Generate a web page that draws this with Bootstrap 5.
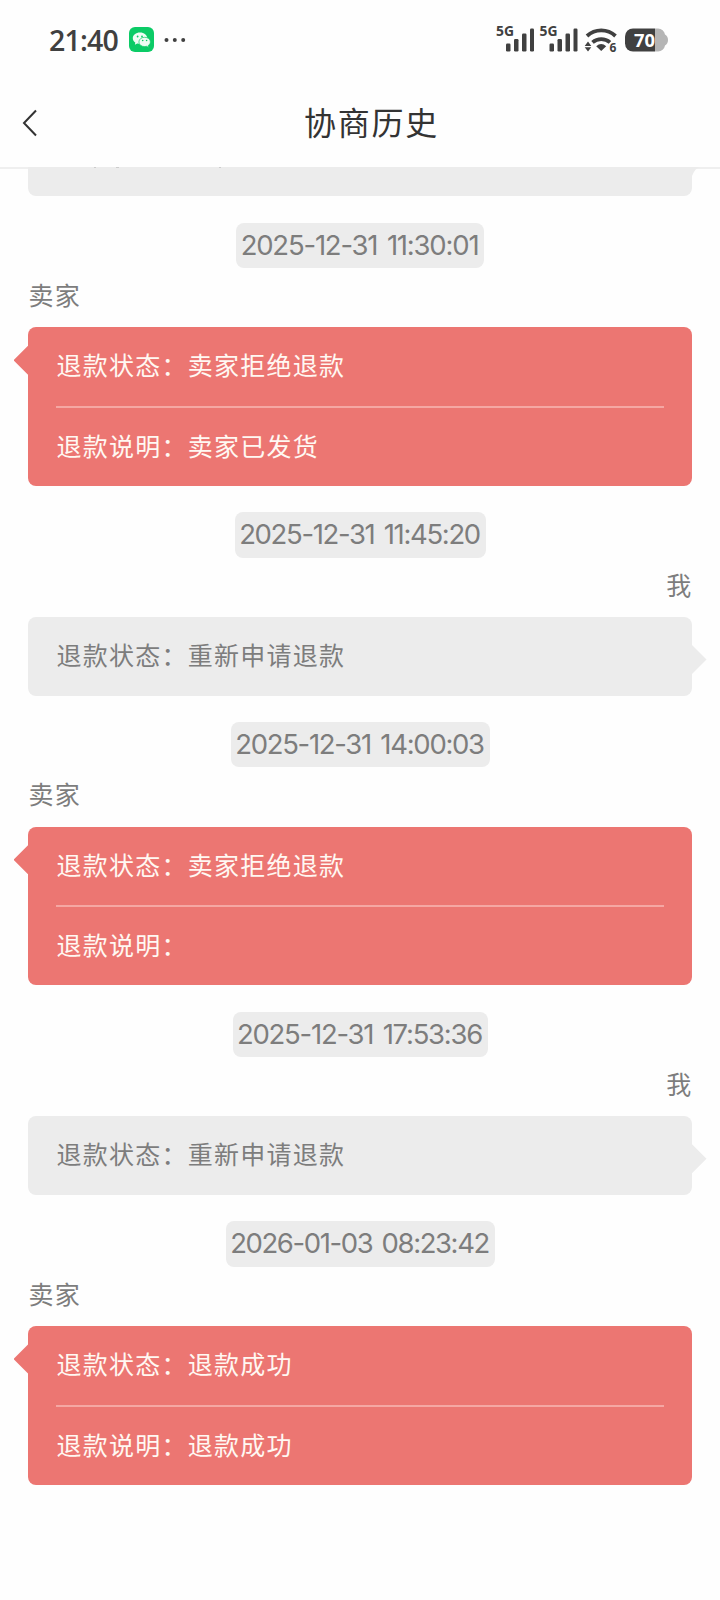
<!DOCTYPE html>
<html lang="zh-CN">
<head>
<meta charset="utf-8">
<meta name="viewport" content="width=device-width, initial-scale=1">
<title>协商历史</title>
<link href="https://cdn.jsdelivr.net/npm/bootstrap@5.3.0/dist/css/bootstrap.min.css" rel="stylesheet">
<style>
body{font-family:"Noto Sans CJK SC",sans-serif;background:#fefefe;color:#7d7d7d;height:1600px;overflow:hidden}
.status-bar{height:80px;padding:0 49px 0 49px;color:#404040}
.clock{font:600 28.5px/40px "Open Sans",sans-serif;letter-spacing:-.8px;width:80px}
.title-bar{height:87px;color:#333}
.title-bar h1{font-size:32px;line-height:48px;letter-spacing:1.7px;padding:0 17px 6px 0}
.title-bar svg{flex:none}
.history{border-top:2px solid #efefef;height:1433px}
.prev{height:29px;margin:-2px 28px 26.5px;border-radius:0 0 8px 8px;background:#ececec}
.prev svg{left:0;top:0;overflow:visible}
.stamp{height:45.5px;width:var(--w);padding-right:1px;border-radius:8px;background:#ececec;font:400 27.5px/45px Inter,sans-serif;letter-spacing:var(--ls);word-spacing:3px;white-space:nowrap}
.who{height:59.3px;font-size:25px;line-height:53.5px;letter-spacing:1.25px;padding:0 28px 0 28.5px}
.who.text-end{padding-right:27.5px}
.bubble{margin:0 28px 26.3px;padding:0 28px;border-radius:8px;font-size:25px;letter-spacing:1.25px}
.bubble p{height:78.6px;line-height:74px;padding-left:.5px}
.bubble p+p{border-top:2px solid #f5a7a3;height:80px}
.bubble::after{content:"";position:absolute;width:15px;height:30px;background:inherit}
.seller{background:#ec7672;color:#fff8f2}
.seller::after{left:-14.5px;top:18px;clip-path:polygon(100% 0,0 50%,100% 100%)}
.mine{background:#ececec}
.mine::after{right:-14.5px;top:27.5px;clip-path:polygon(0 0,100% 50%,0 100%)}
</style>
</head>
<body>
<header>
<div class="status-bar d-flex align-items-center justify-content-between">
  <div class="d-flex align-items-center">
    <span class="clock">21:40</span>
    <svg width="60" height="26" viewBox="0 0 60 26"><rect width="25" height="25" rx="6" fill="#0bcb66"/><path d="M11 5.500c-4.100 0-7.200 2.500-7.200 5.700 0 1.800 1 3.400 2.500 4.400l-.4 2.200 2.300-1.300c.9.300 1.800.4 2.800.4 4.100 0 7.200-2.500 7.200-5.700S15.100 5.500 11 5.500z" fill="#effcf4"/><path d="M15.700 10.300c-3.300 0-5.800 2-5.800 4.700s2.500 4.600 5.800 4.600c.7 0 1.300-.1 1.900-.3l2 1.100-.4-1.800c1.400-.9 2.200-2.200 2.200-3.600 0-2.700-2.500-4.700-5.700-4.700z" fill="#effcf4" stroke="#0bcb66" stroke-width=".7"/><g fill="#0bcb66"><circle cx="8.600" cy="9.500" r=".9"/><circle cx="13" cy="9.500" r=".9"/><circle cx="13.700" cy="13.500" r=".8"/><circle cx="17.600" cy="13.500" r=".8"/></g><g fill="#404040"><circle cx="37.500" cy="13" r="2"/><circle cx="45.800" cy="13" r="2"/><circle cx="54.200" cy="13" r="2"/></g></svg>
  </div>
  <svg width="179" height="36" viewBox="-4 -2 179 36" fill="#404040" font-family="Open Sans,sans-serif" font-weight="700">
    <g id="sig"><text x="0" y="12" font-size="14" textLength="18" lengthAdjust="spacingAndGlyphs">5G</text><rect x="10" y="19.500" width="4.500" height="8" rx="1.200"/><rect x="18" y="15" width="4.500" height="12.500" rx="1.200"/><rect x="26" y="9.500" width="4.500" height="18" rx="1.200"/><rect x="34" y="4.500" width="4" height="23" rx="1.200"/></g>
    <use href="#sig" x="43.500"/>
    <g fill="none" stroke="#404040" stroke-width="3.800"><path d="M91 12a21 21 0 0 1 28.500 0"/><path d="M96.500 18.400a13.500 13.500 0 0 1 17.500 0"/></g>
    <path d="M105.200 27l-5-4.800q5-4.200 10 0zM92 17.500l3.300 4.500h-6.600zM92 27.500l-3.300-4.300h6.600z"/>
    <text x="113.500" y="28" font-size="12">6</text>
    <path d="M159 4.500h3a7 7 0 0 1 7 6c4 2 4 9 0 11a7 7 0 0 1-7 6h-3z" fill="#b5b5b5"/>
    <path d="M137 4.500h22v23h-22a8 8 0 0 1-8-8v-7a8 8 0 0 1 8-8z"/>
    <text x="138" y="22.500" font-size="18.500" fill="#fff" textLength="21" lengthAdjust="spacingAndGlyphs">70</text>
  </svg>
</div>
<div class="title-bar d-flex align-items-center">
  <svg width="40" height="32" viewBox="0 0 40 32"><path d="M36 2.500L24 15l12 12.500" fill="none" stroke="#333" stroke-width="2"/></svg>
  <h1 class="flex-grow-1 text-center fw-normal m-0">协商历史</h1>
</div>
</header>
<main class="history">
<div class="prev position-relative"><svg class="position-absolute" width="680" height="10" viewBox="0 0 680 10"><path d="M664 0h8q-5 1-8 9z" fill="#ececec"/><path d="M66 .5h2M88 .5h3M191 .5h2" stroke="#ccc"/></svg></div>

<div class="stamp mx-auto text-center" style="--w:248.500px;--ls:-1.2px">2025-12-31 11:30:01</div>
<div class="who">卖家</div>
<section class="bubble seller position-relative"><p class="m-0">退款状态：卖家拒绝退款</p><p class="m-0">退款说明：卖家已发货</p></section>

<div class="stamp mx-auto text-center" style="--w:251px;--ls:-1.35px">2025-12-31 11:45:20</div>
<div class="who text-end">我</div>
<section class="bubble mine position-relative"><p class="m-0">退款状态：重新申请退款</p></section>

<div class="stamp mx-auto text-center" style="--w:259px;--ls:-1.3px">2025-12-31 14:00:03</div>
<div class="who">卖家</div>
<section class="bubble seller position-relative"><p class="m-0">退款状态：卖家拒绝退款</p><p class="m-0">退款说明：</p></section>

<div class="stamp mx-auto text-center" style="--w:255px;--ls:-1.25px">2025-12-31 17:53:36</div>
<div class="who text-end">我</div>
<section class="bubble mine position-relative"><p class="m-0">退款状态：重新申请退款</p></section>

<div class="stamp mx-auto text-center" style="--w:269px;--ls:-1.4px">2026-01-03 08:23:42</div>
<div class="who">卖家</div>
<section class="bubble seller position-relative"><p class="m-0">退款状态：退款成功</p><p class="m-0">退款说明：退款成功</p></section>
</main>
<script src="https://cdn.jsdelivr.net/npm/bootstrap@5.3.0/dist/js/bootstrap.bundle.min.js"></script>
</body>
</html>
